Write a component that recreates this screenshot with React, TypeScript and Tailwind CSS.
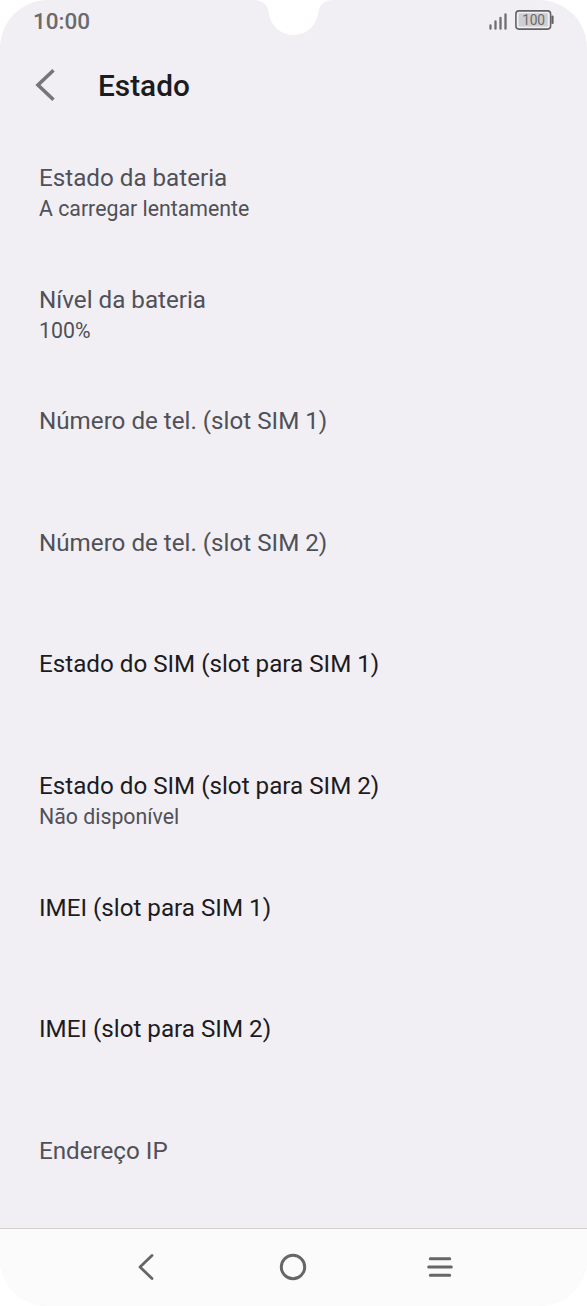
import clsx from 'clsx';

interface StatusItem {
  title: string;
  summary?: string;
  enabled?: boolean;
}

const items: StatusItem[] = [
  { title: 'Estado da bateria', summary: 'A carregar lentamente' },
  { title: 'Nível da bateria', summary: '100%' },
  { title: 'Número de tel. (slot SIM 1)' },
  { title: 'Número de tel. (slot SIM 2)' },
  { title: 'Estado do SIM (slot para SIM 1)', enabled: true },
  { title: 'Estado do SIM (slot para SIM 2)', summary: 'Não disponível', enabled: true },
  { title: 'IMEI (slot para SIM 1)', enabled: true },
  { title: 'IMEI (slot para SIM 2)', enabled: true },
  { title: 'Endereço IP' },
];

function SignalIcon() {
  return (
    <svg width="19" height="20" viewBox="0 0 19 20" fill="none" stroke="#6f6e70" strokeWidth="2.3" strokeLinecap="round">
      <path d="M1.500 18.700v-3.200M6.500 18.700V11.500M11.500 18.700V8M16.500 18.700V4.500" />
    </svg>
  );
}

function BatteryIcon() {
  return (
    <svg width="39" height="20" viewBox="0 0 39 20">
      <rect x="0.900" y="0.900" width="34.700" height="18.200" rx="3" fill="none" stroke="#626163" strokeWidth="1.600" />
      <rect x="3.500" y="3.300" width="29.300" height="13.200" fill="#cfced0" />
      <rect x="36.400" y="5.500" width="2.200" height="8.500" rx="1" fill="#626163" />
      <text x="18.500" y="15" textAnchor="middle" fontSize="13.800" letterSpacing="-0.200" fill="#6b6a6c">100</text>
    </svg>
  );
}

/* Camera cutout */
function Notch() {
  return (
    <svg className="absolute left-[253px] top-0" width="80" height="36" viewBox="0 0 80 36">
      <path d="M0 0C9 0 14 4 15.500 11C17 25 27 35 40.500 35C54 35 64 25 65.500 11C67 4 72 0 80 0Z" fill="#fff" />
    </svg>
  );
}

function StatusBar() {
  return (
    <div className="flex h-10 items-center justify-between pl-[33px] pr-[33px]">
      <span className="pt-px text-[22.5px] font-medium leading-10 text-[#6b6a6c]">10:00</span>
      <div className="flex items-center gap-[7px]">
        <SignalIcon />
        <BatteryIcon />
      </div>
    </div>
  );
}

function Header() {
  return (
    <header className="flex h-[90px] items-center pl-[35px]">
      <svg width="20" height="32" viewBox="0 0 20 32" fill="none" stroke="#767577" strokeWidth="3.6">
        <path d="M18.500 1.300L3 16L18.500 30.700" />
      </svg>
      <h1 className="ml-[43px] pt-[3px] text-[29.8px] font-medium text-[#1c1b1f]">Estado</h1>
    </header>
  );
}

function NavBar() {
  return (
    <nav className="flex h-[78px] shrink-0 items-center justify-center gap-[119px] border-t border-[#d0cfd2] bg-[#fbfbfb] pb-0.5 pr-px">
      <svg width="28" height="28" viewBox="0 0 28 28" fill="none" stroke="#666" strokeWidth="2.8" strokeLinecap="round" strokeLinejoin="round">
        <path d="M20 2.500L8 14L20 25.500" />
      </svg>
      <svg width="28" height="28" viewBox="0 0 28 28" fill="none" stroke="#666" strokeWidth="3">
        <circle cx="14" cy="14" r="11.700" />
      </svg>
      <svg width="28" height="28" viewBox="0 0 28 28" fill="none" stroke="#666" strokeWidth="3" strokeLinecap="round">
        <path d="M4.300 5.800H23.700M2.700 14H25.300M4.300 22.200H23.700" />
      </svg>
    </nav>
  );
}

export default function App() {
  return (
    <div className="h-[1306px] w-[587px] bg-white font-[Roboto,sans-serif]">
      <div className="relative flex h-full flex-col overflow-hidden rounded-[48px] bg-[#f1eff3]">
        <Notch />
        <StatusBar />
        <Header />
        <main className="flex-1 overflow-hidden pt-8">
          {items.map((item) => (
            <div key={item.title} className="h-[121.600px] px-[39px]">
              <div className={clsx('text-[24.2px] leading-8', item.enabled ? 'text-[#1c1b1f]' : 'text-[#505058]')}>
                {item.title}
              </div>
              {item.summary && (
                <div className="text-[21.3px] leading-[30px] text-[#505058]">{item.summary}</div>
              )}
            </div>
          ))}
        </main>
        <NavBar />
      </div>
    </div>
  );
}
